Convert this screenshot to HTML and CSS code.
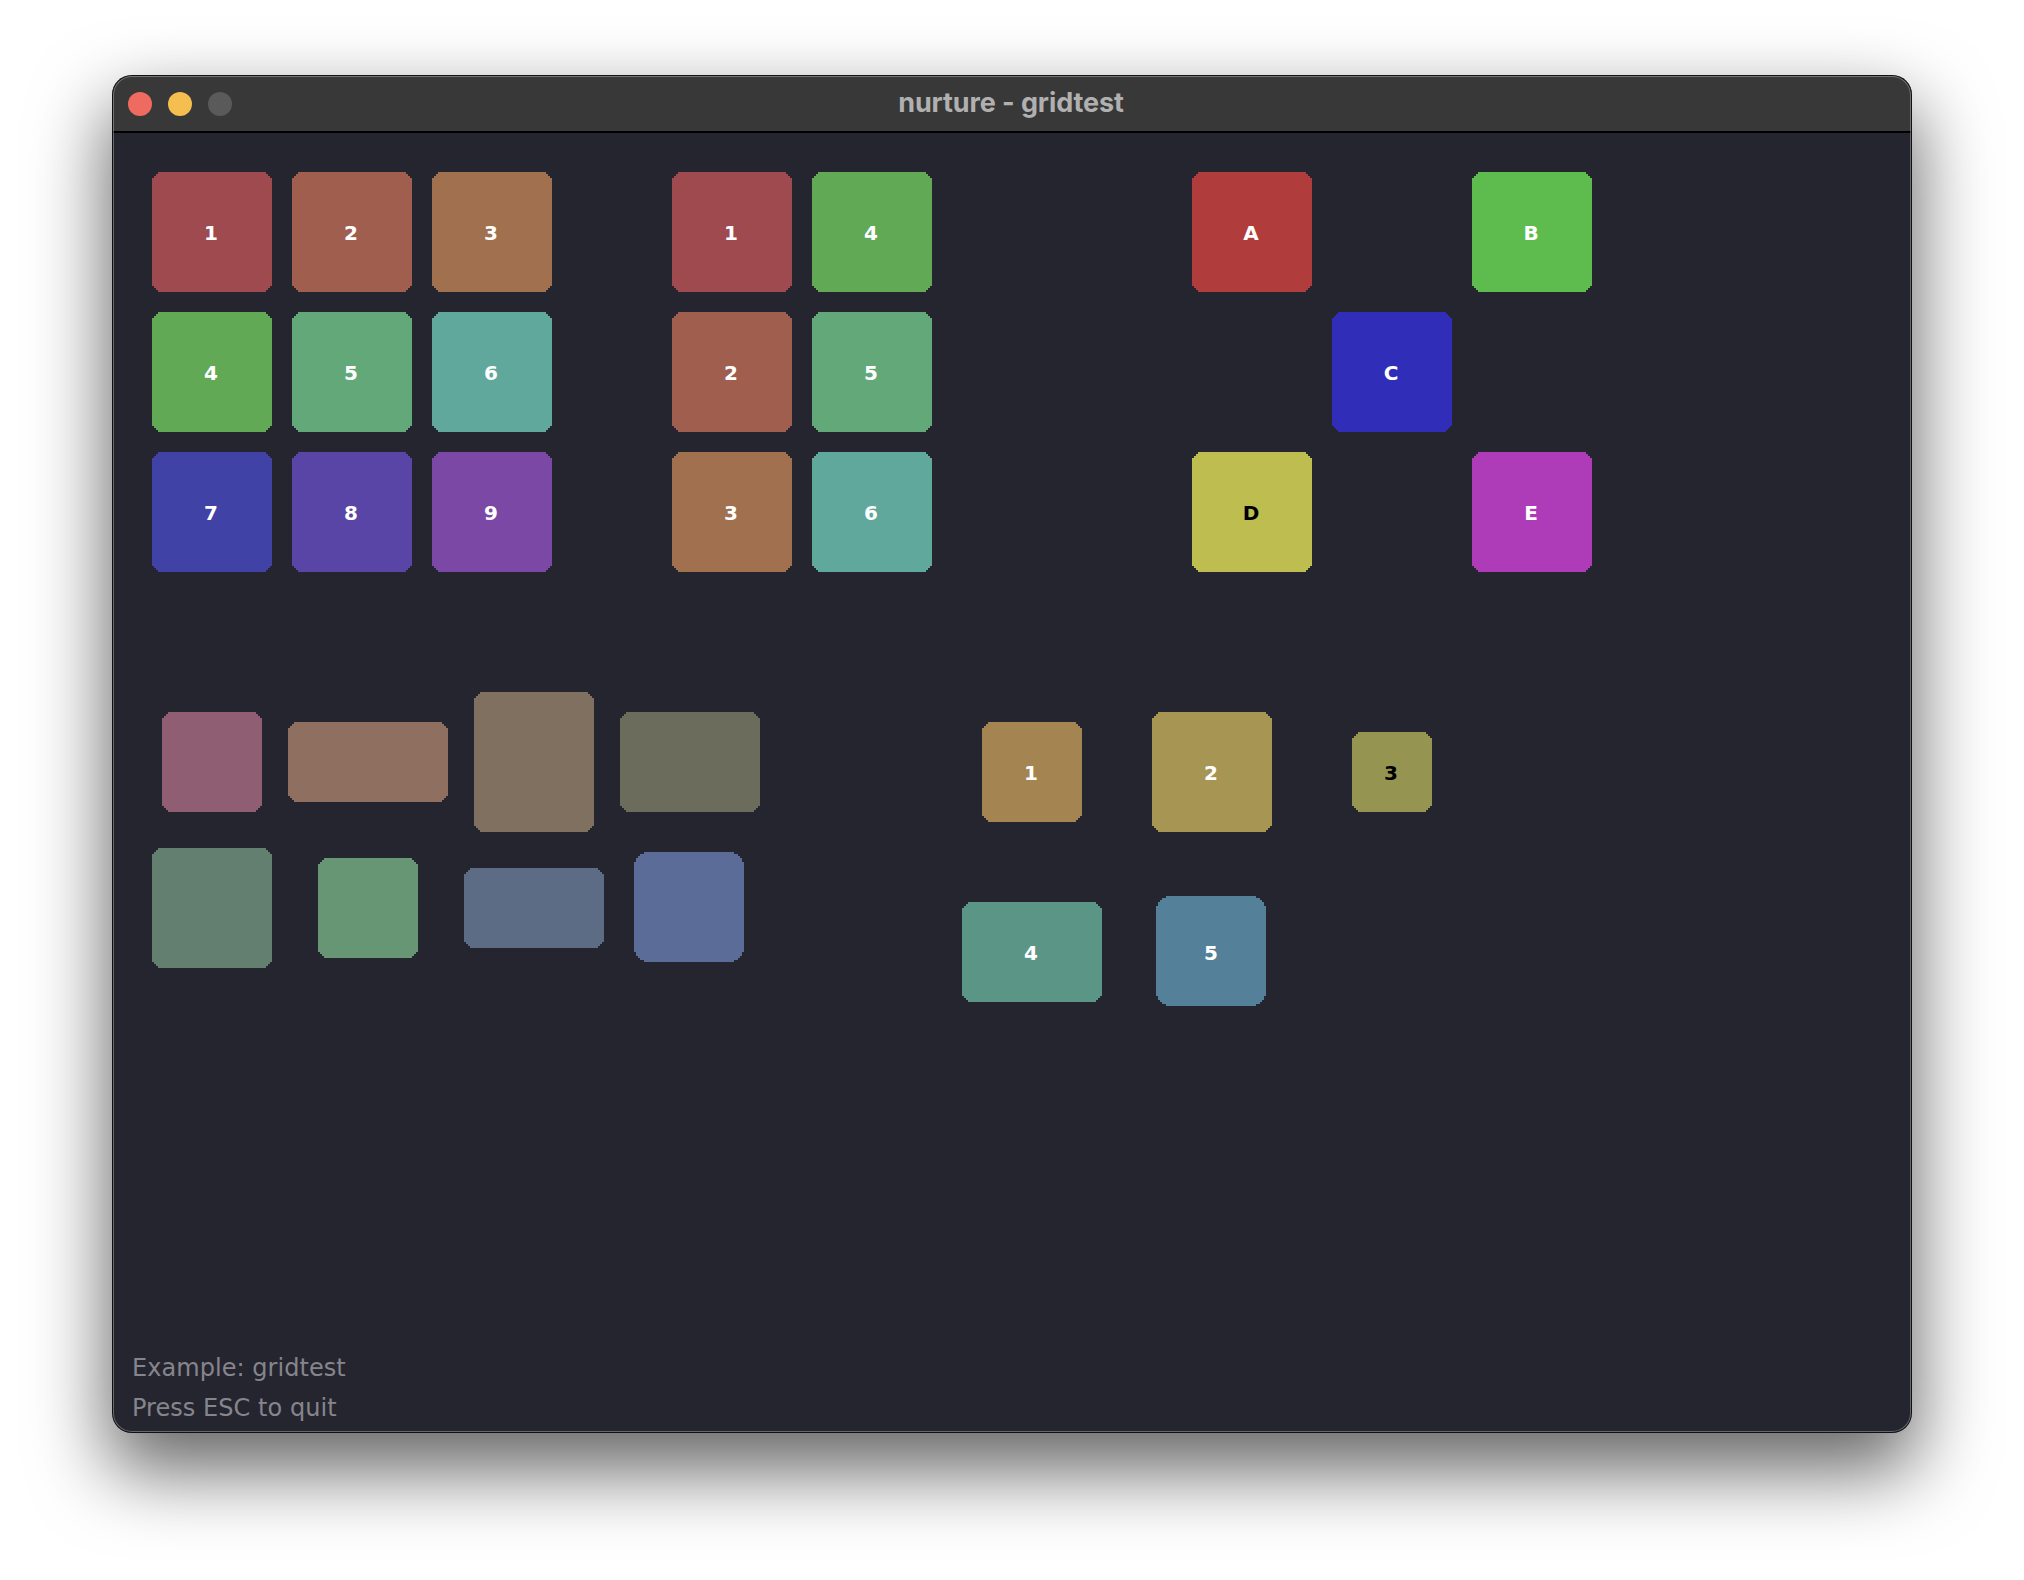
FILE: index.html
```html
<!DOCTYPE html>
<html lang="en">
<head>
<meta charset="utf-8">
<title>nurture - gridtest</title>
<link rel="stylesheet" href="styles.css">
</head>
<body>
<main class="window">
  <header class="titlebar">
    <div class="lights">
      <span class="light light-close"></span>
      <span class="light light-min"></span>
      <span class="light light-max"></span>
    </div>
    <h1 class="title">nurture - gridtest</h1>
  </header>
  <section class="content">
    <div class="top-row">
      <div class="grid grid-three">
        <div class="block c-r1">1</div><div class="block c-r2">2</div><div class="block c-r3">3</div>
        <div class="block c-g1">4</div><div class="block c-g2">5</div><div class="block c-g3">6</div>
        <div class="block c-b1">7</div><div class="block c-b2">8</div><div class="block c-b3">9</div>
      </div>
      <div class="grid grid-three grid-columnflow">
        <div class="block c-r1">1</div><div class="block c-r2">2</div><div class="block c-r3">3</div>
        <div class="block c-g1">4</div><div class="block c-g2">5</div><div class="block c-g3">6</div>
      </div>
      <div class="grid grid-three">
        <div class="block c-a col1 row1">A</div>
        <div class="block c-bb col3 row1">B</div>
        <div class="block c-c col2 row2">C</div>
        <div class="block c-d col1 row3 dark">D</div>
        <div class="block c-e col3 row3">E</div>
      </div>
    </div>
    <div class="bottom-row">
      <div class="grid grid-mixed">
        <div class="block w100 h100 c-m1"></div>
        <div class="block w160 h80 c-m2"></div>
        <div class="block w120 h140 c-m3"></div>
        <div class="block w140 h100 c-m4"></div>
        <div class="block w120 h120 c-m5"></div>
        <div class="block w100 h100 c-m6"></div>
        <div class="block w140 h80 c-m7"></div>
        <div class="block w110 h110 round c-m8"></div>
      </div>
      <div class="grid grid-spaced">
        <div class="block w100 h100 c-s1">1</div>
        <div class="block w120 h120 c-s2">2</div>
        <div class="block w80 h80 c-s3 dark">3</div>
        <div class="block w140 h100 c-s4">4</div>
        <div class="block w110 h110 round c-s5">5</div>
      </div>
    </div>
    <footer class="status">
      <p class="status-line">Example: gridtest</p>
      <p class="status-line">Press ESC to quit</p>
    </footer>
  </section>
</main>
</body>
</html>
```

FILE: styles.css
```css
* { box-sizing: border-box; }

html, body { margin: 0; padding: 0; background: #fff; }

body { width: 2024px; height: 1580px; overflow: hidden; padding: 75px 0 0 112px; }

.window {
  position: relative;
  width: 1800px;
  height: 1358px;
  border-radius: 20px;
  overflow: hidden;
  display: flex;
  flex-direction: column;
  background: #252530;
  box-shadow: 0 34px 76px 4px rgba(0, 0, 0, 0.6);
}

.window::after {
  content: "";
  position: absolute;
  inset: 0;
  border-radius: 20px;
  box-shadow: inset 0 0 0 1px #111, inset 0 0 0 2px rgba(255, 255, 255, 0.3);
  pointer-events: none;
}

.titlebar {
  flex: none;
  height: 58px;
  display: flex;
  align-items: center;
  justify-content: center;
  position: relative;
  background: #383838;
  border-bottom: 2px solid #000;
}

.lights {
  position: absolute;
  left: 16px;
  top: 17px;
  display: flex;
  gap: 16px;
}

.light { width: 24px; height: 24px; border-radius: 50%; }
.light-close { background: #ef6b5f; }
.light-min { background: #f4bf4f; }
.light-max { background: #5a5a5a; }

.title {
  margin: -2px 0 0 -2px;
  font: 700 27px/1 Inter, "Liberation Sans", sans-serif;
  color: #b0b0b0;
  letter-spacing: -0.1px;
}

.content {
  flex: 1;
  display: flex;
  flex-direction: column;
  padding: 39px 0 0 40px;
}

.top-row {
  display: grid;
  grid-template-columns: repeat(3, 400px);
  column-gap: 120px;
}

.grid { display: grid; }

.grid-three {
  grid-template-columns: repeat(3, 120px);
  grid-template-rows: repeat(3, 120px);
  gap: 20px;
}

.grid-columnflow { grid-auto-flow: column; }

.col1 { grid-column: 1; }
.col2 { grid-column: 2; }
.col3 { grid-column: 3; }
.row1 { grid-row: 1; }
.row2 { grid-row: 2; }
.row3 { grid-row: 3; }

.bottom-row {
  display: flex;
  align-items: flex-start;
  gap: 202px;
  margin-top: 120px;
}

.grid-mixed {
  grid-template-columns: 120px 160px 140px 140px;
  grid-template-rows: 140px 120px;
  gap: 16px;
  place-items: center;
}

.grid-spaced {
  margin-top: 20px;
  grid-template-columns: 140px 120px 140px;
  grid-template-rows: 120px 120px;
  gap: 60px 50px;
  place-items: center;
}

.block {
  display: flex;
  align-items: center;
  justify-content: center;
  padding: 2px 2px 0 0;
  font: 700 20px/1 "DejaVu Sans", sans-serif;
  color: #fff;
  clip-path: polygon(
    6px 0, calc(100% - 6px) 0,
    calc(100% - 6px) 2px, calc(100% - 4px) 2px,
    calc(100% - 4px) 4px, calc(100% - 2px) 4px,
    calc(100% - 2px) 6px, 100% 6px,
    100% calc(100% - 6px), calc(100% - 2px) calc(100% - 6px),
    calc(100% - 2px) calc(100% - 4px), calc(100% - 4px) calc(100% - 4px),
    calc(100% - 4px) calc(100% - 2px), calc(100% - 6px) calc(100% - 2px),
    calc(100% - 6px) 100%, 6px 100%,
    6px calc(100% - 2px), 4px calc(100% - 2px),
    4px calc(100% - 4px), 2px calc(100% - 4px),
    2px calc(100% - 6px), 0 calc(100% - 6px),
    0 6px, 2px 6px,
    2px 4px, 4px 4px,
    4px 2px, 6px 2px
  );
}

.round {
  margin: 0 2px 2px 0;
  padding: 4px 0 0;
  clip-path: polygon(
    10px 0, calc(100% - 10px) 0,
    calc(100% - 10px) 2px, calc(100% - 6px) 2px,
    calc(100% - 6px) 4px, calc(100% - 4px) 4px,
    calc(100% - 4px) 6px, calc(100% - 2px) 6px,
    calc(100% - 2px) 10px, 100% 10px,
    100% calc(100% - 10px), calc(100% - 2px) calc(100% - 10px),
    calc(100% - 2px) calc(100% - 6px), calc(100% - 4px) calc(100% - 6px),
    calc(100% - 4px) calc(100% - 4px), calc(100% - 6px) calc(100% - 4px),
    calc(100% - 6px) calc(100% - 2px), calc(100% - 10px) calc(100% - 2px),
    calc(100% - 10px) 100%, 10px 100%,
    10px calc(100% - 2px), 6px calc(100% - 2px),
    6px calc(100% - 4px), 4px calc(100% - 4px),
    4px calc(100% - 6px), 2px calc(100% - 6px),
    2px calc(100% - 10px), 0 calc(100% - 10px),
    0 10px, 2px 10px,
    2px 6px, 4px 6px,
    4px 4px, 6px 4px,
    6px 2px, 10px 2px
  );
}

.dark { color: #000; }

.w80 { width: 80px; }
.w100 { width: 100px; }
.w110 { width: 110px; }
.w120 { width: 120px; }
.w140 { width: 140px; }
.w160 { width: 160px; }
.h80 { height: 80px; }
.h100 { height: 100px; }
.h110 { height: 110px; }
.h120 { height: 120px; }
.h140 { height: 140px; }

.c-r1 { background: #9e4a4f; }
.c-r2 { background: #a05f4e; }
.c-r3 { background: #a1714f; }
.c-g1 { background: #62a955; }
.c-g2 { background: #63a878; }
.c-g3 { background: #5fa89b; }
.c-b1 { background: #4142a5; }
.c-b2 { background: #5845a5; }
.c-b3 { background: #7c48a5; }

.c-a { background: #b03c3c; }
.c-bb { background: #5ebb4e; }
.c-c { background: #302eb8; }
.c-d { background: #bebe50; }
.c-e { background: #ae3cb8; }

.c-m1 { background: #8f5e72; }
.c-m2 { background: #8f7060; }
.c-m3 { background: #7f705f; }
.c-m4 { background: #6b6c5b; }
.c-m5 { background: #627f70; }
.c-m6 { background: #669674; }
.c-m7 { background: #5c6c85; }
.c-m8 { background: #5c6c98; }

.c-s1 { background: #a48450; }
.c-s2 { background: #a79653; }
.c-s3 { background: #959450; }
.c-s4 { background: #5b9585; }
.c-s5 { background: #548099; }

.status {
  margin: auto 0 0 -20px;
  padding-bottom: 5px;
}

.status-line {
  margin: 0;
  font: 400 24px/40px "DejaVu Sans", sans-serif;
  letter-spacing: 0.05px;
  color: #85858c;
}
```
